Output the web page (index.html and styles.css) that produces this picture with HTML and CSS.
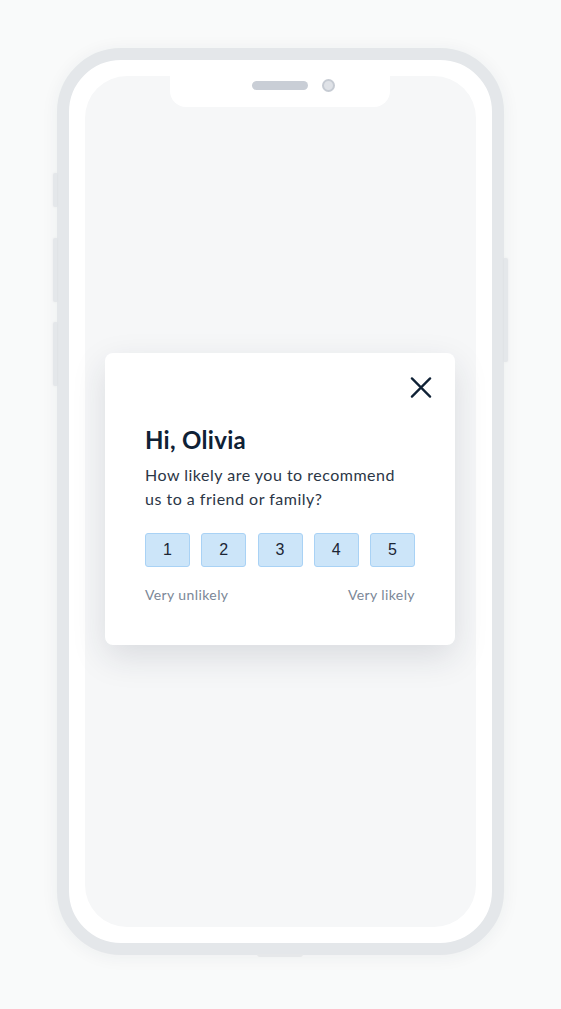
FILE: index.html
```html
<!DOCTYPE html>
<html lang="en">
<head>
<meta charset="utf-8">
<title>Survey</title>
<link rel="stylesheet" href="styles.css">
</head>
<body>
<div class="phone">
  <span class="side-btn left b1"></span>
  <span class="side-btn left b2"></span>
  <span class="side-btn left b3"></span>
  <span class="side-btn right b4"></span>
  <span class="bottom-bump"></span>
  <div class="bezel">
    <div class="screen">
      <div class="notch">
        <span class="speaker"></span>
        <span class="camera"></span>
      </div>
      <div class="dialog">
        <div class="close-row">
          <button class="close" aria-label="Close">
            <svg width="22" height="22" viewBox="0 0 22 22" fill="none" stroke="#0f2135" stroke-width="2.4" stroke-linecap="round">
              <path d="M1.5 1.5 L20.5 20.5 M20.5 1.5 L1.5 20.5"/>
            </svg>
          </button>
        </div>
        <div class="content">
          <h1 class="title">Hi, Olivia</h1>
          <p class="question">How likely are you to recommend us to a friend or family?</p>
          <div class="scale">
            <button class="score">1</button>
            <button class="score">2</button>
            <button class="score">3</button>
            <button class="score">4</button>
            <button class="score">5</button>
          </div>
          <div class="labels">
            <span>Very unlikely</span>
            <span>Very likely</span>
          </div>
        </div>
      </div>
    </div>
  </div>
</div>
</body>
</html>
```

FILE: styles.css
```css
* { box-sizing: border-box; }
html, body { margin: 0; padding: 0; }
body {
  background: #f9fafa;
  font-family: Lato, "Noto Sans", sans-serif;
  width: 561px;
  height: 1009px;
  overflow: hidden;
}
.phone {
  position: relative;
  margin: 48px 0 0 57px;
  width: 447px;
  height: 907px;
  border: 12px solid #e4e7ea;
  border-radius: 64px;
  background: #fff;
  box-shadow: 0 2px 18px rgba(40, 50, 60, 0.06);
}
.side-btn {
  position: absolute;
  width: 4px;
  background: #e4e7ea;
  box-shadow: 0 0 3px rgba(0,0,0,0.05);
}
.side-btn.left { left: -16px; border-radius: 2px 0 0 2px; }
.side-btn.right { right: -16px; border-radius: 0 2px 2px 0; }
.b1 { top: 113px; height: 34px; }
.b2 { top: 178px; height: 64px; }
.b3 { top: 262px; height: 64px; }
.b4 { top: 198px; height: 104px; }
.bottom-bump {
  position: absolute;
  bottom: -14px;
  left: 188px;
  width: 46px;
  height: 3px;
  border-radius: 0 0 3px 3px;
  background: #e6e8ea;
}
.bezel {
  width: 100%;
  height: 100%;
  padding: 16px;
  border-radius: 52px;
}
.screen {
  position: relative;
  width: 100%;
  height: 100%;
  background: #f6f7f8;
  border-radius: 42px;
  display: flex;
  align-items: center;
  padding: 0 0 6px 20px;
}
.notch {
  position: absolute;
  top: 0;
  left: 85px;
  width: 220px;
  height: 31px;
  background: #fff;
  border-radius: 0 0 16px 16px;
  display: flex;
  align-items: center;
  padding: 0 0 13px 82px;
}
.speaker {
  width: 56px;
  height: 9px;
  border-radius: 5px;
  background: #c9ced6;
}
.camera {
  margin-left: 14px;
  width: 13px;
  height: 13px;
  border-radius: 50%;
  background: #dfe2e7;
  border: 2px solid #c6cbd3;
}
.dialog {
  width: 350px;
  background: #fff;
  border-radius: 8px;
  box-shadow: 0 12px 34px rgba(30, 40, 60, 0.13);
  padding: 24px 23px 40px 40px;
}
.close-row {
  display: flex;
  justify-content: flex-end;
}
.close {
  display: block;
  width: 22px;
  height: 21px;
  padding: 0;
  margin: 0;
  border: 0;
  background: none;
  cursor: pointer;
}
.close svg { display: block; width: 22px; height: 21px; }
.content {
  padding-right: 17px;
}
.title {
  margin: 27px 0 0;
  font-size: 24px;
  line-height: 30px;
  font-weight: 700;
  letter-spacing: 0.3px;
  color: #0f2135;
}
.question {
  margin: 8px 0 0;
  max-width: 262px;
  font-size: 16px;
  line-height: 24px;
  letter-spacing: 0.5px;
  color: #2b3646;
}
.scale {
  margin-top: 22px;
  display: flex;
  justify-content: space-between;
}
.score {
  width: 45px;
  height: 34px;
  padding: 0;
  border: 1px solid #a9d2f5;
  border-radius: 3px;
  background: #cce5f9;
  font-family: "Liberation Sans", Arial, sans-serif;
  font-size: 16px;
  color: #1c2635;
  cursor: pointer;
}
.labels {
  margin-top: 18px;
  display: flex;
  justify-content: space-between;
  font-size: 14px;
  line-height: 20px;
  letter-spacing: 0.4px;
  color: #7b8797;
}
```
